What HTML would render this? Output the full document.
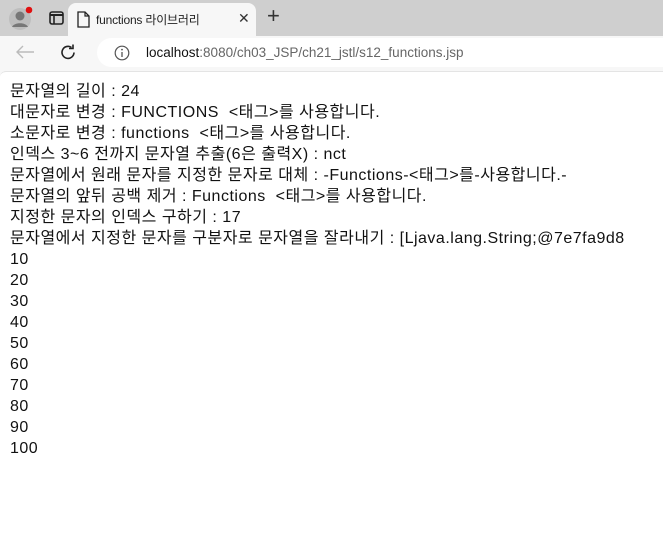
<!DOCTYPE html>
<html><head><meta charset="utf-8"><style>
*{margin:0;padding:0;box-sizing:border-box}
body{width:663px;height:558px;overflow:hidden;background:#f7f7f7;font-family:"Liberation Sans","Noto Sans CJK KR",sans-serif;position:relative}
.tabbar{position:absolute;left:0;top:0;width:663px;height:36px;background:#cfcfcf}
.tab{position:absolute;left:68px;top:3px;width:188px;height:34px;background:#f7f7f7;border-radius:8px 8px 0 0}
.tab .t{position:absolute;left:28px;top:8px;font-size:12px;color:#222;letter-spacing:-0.2px}
.tab .x{position:absolute;left:170px;top:7px;font-size:14px;color:#333}
.plus{position:absolute;top:3px;font-size:22px;color:#333;font-weight:300}
.pill{position:absolute;left:97px;top:38px;width:580px;height:29px;background:#fff;border-radius:15px}
.url{position:absolute;left:146px;top:45px;font-size:13.5px;color:#666}
.url b{font-weight:normal;color:#111}
.content{position:absolute;left:0;top:71px;width:663px;height:487px;background:#fff;border-top:1px solid #e4e4e4;border-radius:6px 0 0 0}
.lines{position:absolute;left:10px;top:81px;font-size:16px;letter-spacing:0.5px;line-height:21px;color:#111;white-space:pre}
</style></head><body>
<div class="tabbar">
<svg style="position:absolute;left:8px;top:6px" width="26" height="26"><circle cx="12" cy="13" r="11" fill="#bdbdbd"/><circle cx="12" cy="10" r="4.5" fill="#777"/><path d="M4 21c2-5 14-5 16 0" fill="#777"/><circle cx="21" cy="4" r="3.3" fill="#e01010"/></svg>
<svg style="position:absolute;left:49px;top:11px" width="15" height="14"><rect x="1" y="1" width="13" height="12" rx="2" fill="none" stroke="#222" stroke-width="1.6"/><line x1="1" y1="4" x2="14" y2="4" stroke="#222" stroke-width="2"/><line x1="5" y1="4" x2="5" y2="13" stroke="#222" stroke-width="1.6"/></svg>
<div class="tab">
<svg style="position:absolute;left:9px;top:8px" width="13" height="17"><path d="M1 1h7l4 4v11H1z" fill="none" stroke="#222" stroke-width="1.3"/><path d="M8 1v4h4" fill="none" stroke="#222" stroke-width="1.2"/></svg>
<span class="t">functions 라이브러리</span><span class="x">✕</span></div>
<span class="plus" style="left:267px">+</span>
</div>
<svg style="position:absolute;left:14px;top:44px" width="22" height="16"><path d="M20 8H3M9 2L3 8l6 6" fill="none" stroke="#bbb" stroke-width="1.4"/></svg>
<svg style="position:absolute;left:59px;top:43px" width="19" height="19"><path d="M15 9.5A6 6 0 1 1 12.5 4.5" fill="none" stroke="#222" stroke-width="1.6"/><path d="M10 3.5h4v-4" fill="none" stroke="#222" stroke-width="1.6" transform="translate(0,2)"/></svg>
<div class="pill"></div>
<svg style="position:absolute;left:114px;top:45px" width="16" height="16"><circle cx="8" cy="8" r="6.8" fill="none" stroke="#555" stroke-width="1.2"/><line x1="8" y1="7" x2="8" y2="12" stroke="#555" stroke-width="1.3"/><circle cx="8" cy="4.6" r="0.9" fill="#555"/></svg>
<div class="url"><b>localhost</b>:8080/ch03_JSP/ch21_jstl/s12_functions.jsp</div>
<div class="content"></div>
<div class="lines">문자열의 길이 : 24
대문자로 변경 : FUNCTIONS  &lt;태그&gt;를 사용합니다.
소문자로 변경 : functions  &lt;태그&gt;를 사용합니다.
인덱스 3~6 전까지 문자열 추출(6은 출력X) : nct
문자열에서 원래 문자를 지정한 문자로 대체 : -Functions-&lt;태그&gt;를-사용합니다.-
문자열의 앞뒤 공백 제거 : Functions  &lt;태그&gt;를 사용합니다.
지정한 문자의 인덱스 구하기 : 17
문자열에서 지정한 문자를 구분자로 문자열을 잘라내기 : [Ljava.lang.String;@7e7fa9d8
10
20
30
40
50
60
70
80
90
100</div>
</body></html>
